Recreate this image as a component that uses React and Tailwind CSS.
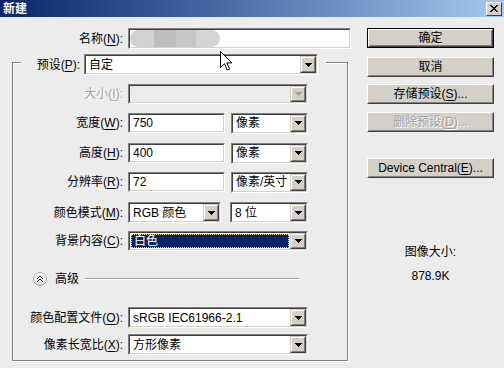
import React from "react";

function Tri({ disabled }) {
  return (
    <svg width="7" height="4" viewBox="0 0 7 4" shapeRendering="crispEdges">
      <path d="M0 0h7v1H0zM1 1h5v1H1zM2 2h3v1H2zM3 3h1v1H3z" fill={disabled ? "#a0a0a0" : "#000"} />
    </svg>
  );
}

function DropBtn({ disabled }) {
  return (
    <div className="w-[16px] h-full shrink-0 bg-[#d4d0c8] border border-t-[#d4d0c8] border-l-[#d4d0c8] border-b-[#404040] border-r-[#404040]">
      <div className="w-full h-full flex items-center justify-center border border-t-white border-l-white border-b-[#808080] border-r-[#808080]">
        <Tri disabled={disabled} />
      </div>
    </div>
  );
}

function Sunken({ className, inner, children }) {
  return (
    <div className={`shrink-0 border border-t-[#808080] border-l-[#808080] border-b-white border-r-white ${className}`}>
      <div className={`h-full w-full flex items-center border border-t-[#404040] border-l-[#404040] border-b-[#d4d0c8] border-r-[#d4d0c8] ${inner}`}>
        {children}
      </div>
    </div>
  );
}

function Select({ className, text, disabled, selected }) {
  return (
    <Sunken className={className} inner={disabled ? "bg-[#ececec]" : "bg-white"}>
      {selected ? (
        <div className="flex-1 h-full p-[1px]">
          <div className="h-full bg-[#0a246a] border border-dotted border-[#e8d890] text-white flex items-center pl-[2px]">
            {text}
          </div>
        </div>
      ) : (
        <div className="flex-1 pl-[3px] whitespace-nowrap overflow-hidden">{text}</div>
      )}
      <DropBtn disabled={disabled} />
    </Sunken>
  );
}

function Input({ className, text }) {
  return (
    <Sunken className={className} inner="bg-white">
      <div className="pl-[3px]">{text}</div>
    </Sunken>
  );
}

function Btn({ children, def, disabled, className }) {
  const face = (
    <div className="w-full h-full bg-[#d4d0c8] border border-t-white border-l-white border-b-[#404040] border-r-[#404040]">
      <div
        className={`w-full h-full flex items-center justify-center border border-t-[#d4d0c8] border-l-[#d4d0c8] border-b-[#808080] border-r-[#808080] ${
          disabled ? "text-[#a0a0a0] [text-shadow:1px_1px_0_#ffffff]" : "text-black"
        }`}
      >
        {children}
      </div>
    </div>
  );
  return (
    <div className={`w-[127px] h-[20px] ${def ? "border border-black" : ""} ${className}`}>{face}</div>
  );
}

function Label({ children, className }) {
  return <div className={`shrink-0 text-right whitespace-nowrap ${className}`}>{children}</div>;
}

function U({ children }) {
  return <span className="underline underline-offset-2">{children}</span>;
}

export default function App() {
  return (
    <div
      className="relative w-[504px] h-[368px] overflow-hidden bg-[#ececec] text-[12px] leading-[14px] text-black"
      style={{ fontFamily: '"Liberation Sans", "Noto Sans CJK SC", sans-serif' }}
    >
      {/* Title bar */}
      <div className="h-[17px] flex items-center justify-between bg-gradient-to-r from-[#0a246a] to-[#a6caf0]">
        <div className="pl-[3px] text-white font-bold text-[12px] leading-[14px]">新建</div>
        <div className="mr-[2px] w-[16px] h-[14px] bg-[#d4d0c8] border border-t-white border-l-white border-b-[#404040] border-r-[#404040] flex items-center justify-center">
          <svg width="8" height="7" viewBox="0 0 8 7" shapeRendering="crispEdges">
            <path d="M0 0h2v1H0zM6 0h2v1H6zM1 1h2v1H1zM5 1h2v1H5zM2 2h4v1H2zM3 3h2v1H3zM2 4h4v1H2zM1 5h2v1H1zM5 5h2v1H5zM0 6h2v1H0zM6 6h2v1H6z" fill="#000" />
          </svg>
        </div>
      </div>

      {/* Body */}
      <div className="flex pt-[11px]">
        {/* Left column */}
        <div className="w-[348px] shrink-0">
          <div className="flex items-center h-[21px]">
            <Label className="w-[123px]">
              名称(<U>N</U>):
            </Label>
            <Sunken className="ml-[5px] w-[223px] h-[21px]" inner="bg-white">
              <div className="flex h-[17px] w-[90px] rounded-full overflow-hidden blur-[0.5px]">
                <div className="w-[24px] bg-[#d2d2d2]" />
                <div className="w-[22px] bg-[#bdbdbd]" />
                <div className="w-[20px] bg-[#c6c6c6]" />
                <div className="w-[24px] bg-[#d4d4d4]" />
              </div>
            </Sunken>
          </div>

          {/* Group box */}
          <div className="ml-[12px] mt-[13px] w-[336px] h-[299px] border border-[#808080] shadow-[1px_1px_0_#ffffff,inset_1px_1px_0_#ffffff]">
            <div className="-mt-[9px] ml-[8px] w-[305px] h-[21px] bg-[#ececec] flex items-center">
              <Label className="w-[59px]">
                预设(<U>P</U>):
              </Label>
              <Select className="ml-[4px] w-[234px] h-[21px]" text="自定" />
            </div>

            <div className="mt-[9px] flex items-center h-[20px]">
              <Label className="w-[110px] text-[#a0a0a0] [text-shadow:1px_1px_0_#ffffff]">
                大小(<U>I</U>):
              </Label>
              <Select className="ml-[5px] w-[180px] h-[20px]" text="" disabled />
            </div>

            <div className="mt-[9px] flex items-center h-[20px]">
              <Label className="w-[110px]">
                宽度(<U>W</U>):
              </Label>
              <Input className="ml-[5px] w-[97px] h-[20px]" text="750" />
              <Select className="ml-[6px] w-[77px] h-[21px]" text="像素" />
            </div>

            <div className="mt-[10px] flex items-center h-[20px]">
              <Label className="w-[110px]">
                高度(<U>H</U>):
              </Label>
              <Input className="ml-[5px] w-[97px] h-[20px]" text="400" />
              <Select className="ml-[6px] w-[77px] h-[21px]" text="像素" />
            </div>

            <div className="mt-[9px] flex items-center h-[20px]">
              <Label className="w-[110px]">
                分辨率(<U>R</U>):
              </Label>
              <Input className="ml-[5px] w-[97px] h-[20px]" text="72" />
              <Select className="ml-[6px] w-[77px] h-[21px]" text="像素/英寸" />
            </div>

            <div className="mt-[10px] flex items-center h-[21px]">
              <Label className="w-[110px]">
                颜色模式(<U>M</U>):
              </Label>
              <Select className="ml-[5px] w-[93px] h-[21px]" text="RGB 颜色" />
              <Select className="ml-[9px] w-[78px] h-[21px]" text="8 位" />
            </div>

            <div className="mt-[8px] flex items-center h-[20px]">
              <Label className="w-[110px]">
                背景内容(<U>C</U>):
              </Label>
              <Select className="ml-[5px] w-[180px] h-[20px]" text="白色" selected />
            </div>

            <div className="mt-[21px] ml-[20px] w-[266px] h-[14px] flex items-center">
              <div className="w-[14px] h-[14px] shrink-0 rounded-full border border-[#a8a8a8] bg-gradient-to-b from-white to-[#dcdcdc] flex items-center justify-center">
                <svg width="6" height="7" viewBox="0 0 6 7" shapeRendering="crispEdges">
                  <path d="M2 0h2v1H2zM1 1h1v1H1zM4 1h1v1H4zM0 2h1v1H0zM5 2h1v1H5zM2 3h2v1H2zM1 4h1v1H1zM4 4h1v1H4zM0 5h1v1H0zM5 5h1v1H5z" fill="#000" />
                </svg>
              </div>
              <div className="ml-[8px] shrink-0">高级</div>
              <div className="ml-[6px] flex-1 h-[2px] border-t border-[#a0a0a0] border-b border-b-white" />
            </div>

            <div className="mt-[21px] flex items-center h-[21px]">
              <Label className="w-[110px]">
                颜色配置文件(<U>O</U>):
              </Label>
              <Select className="ml-[5px] w-[180px] h-[21px]" text="sRGB IEC61966-2.1" />
            </div>

            <div className="mt-[6px] flex items-center h-[21px]">
              <Label className="w-[110px]">
                像素长宽比(<U>X</U>):
              </Label>
              <Select className="ml-[5px] w-[180px] h-[21px]" text="方形像素" />
            </div>
          </div>
        </div>

        {/* Right column */}
        <div className="ml-[19px] w-[127px] shrink-0 flex flex-col">
          <Btn def>确定</Btn>
          <Btn className="mt-[9px]">取消</Btn>
          <Btn className="mt-[7px]">
            存储预设(<U>S</U>)...
          </Btn>
          <Btn className="mt-[8px]" disabled>
            删除预设(<U>D</U>)...
          </Btn>
          <Btn className="mt-[26px]">
            Device Central(<U>E</U>)...
          </Btn>
          <div className="mt-[67px] text-center h-[14px]">图像大小:</div>
          <div className="mt-[10px] text-center h-[14px]">878.9K</div>
        </div>
      </div>

      {/* Mouse cursor */}
      <svg className="absolute left-[220px] top-[51px]" width="13" height="20" viewBox="0 0 13 20">
        <path d="M0.5 0.5 L0.5 16.5 L4.5 12.8 L7.3 19 L9.6 18 L6.9 11.9 L11.8 11.9 Z" fill="#fff" stroke="#000" strokeWidth="1" />
      </svg>
    </div>
  );
}
